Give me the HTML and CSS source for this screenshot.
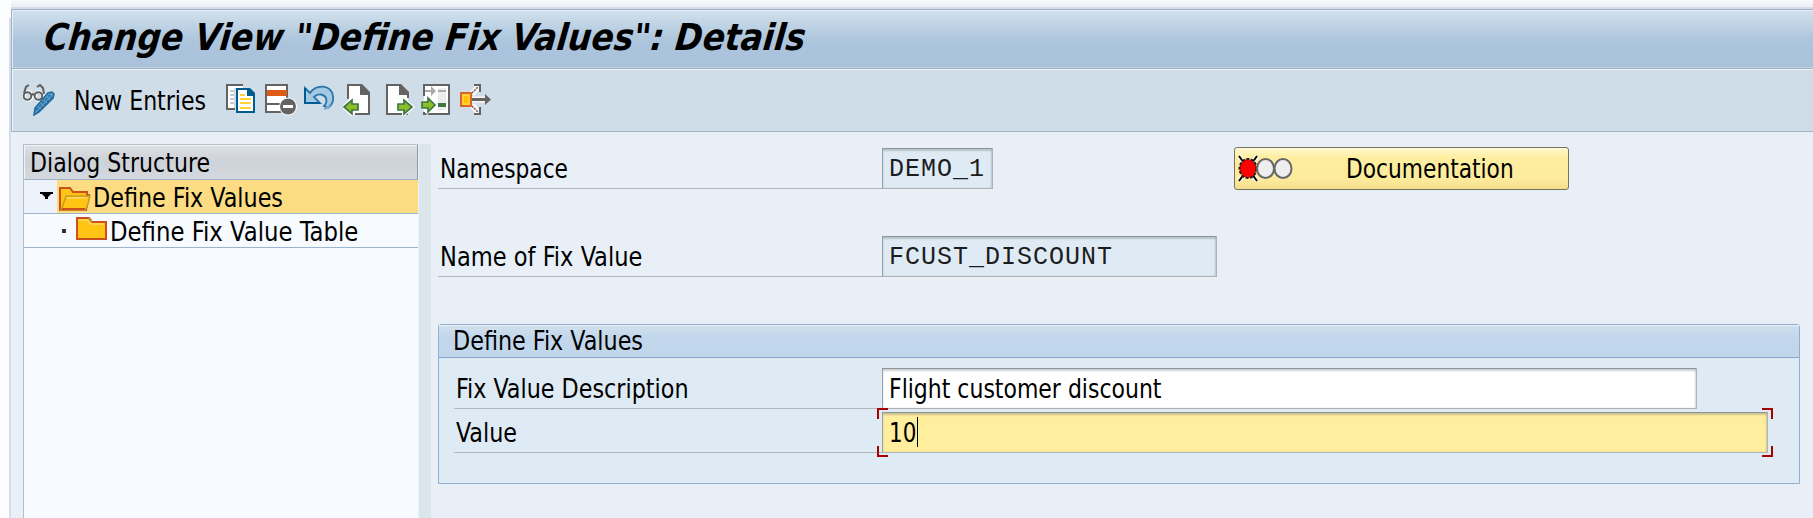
FILE: index.html
```
<!DOCTYPE html>
<html lang="en">
<head>
<meta charset="utf-8">
<title>Change View "Define Fix Values": Details</title>
<link rel="stylesheet" href="styles.css">
</head>
<body>
<div class="desktop">
  <main class="window">
    <header class="titlebar"><h1 class="title">Change View "Define Fix Values": Details</h1></header>
    <nav class="toolbar">
      <svg class="icon" viewBox="0 0 32 32">
        <g fill="none" stroke="#fff" stroke-width="3.5"><circle cx="5" cy="12" r="4"/><circle cx="16" cy="12" r="4"/></g>
        <g fill="none" stroke="#5f5f5f" stroke-width="2"><circle cx="4.5" cy="12" r="3.8"/><circle cx="15.5" cy="12" r="3.8"/><path d="M1 9 3 3 6 1M8 11l2-1 2 1M14 3l3-2 3 3 1 6"/></g>
        <path d="M11 31l1-7L25 9l4-1 2 2-1 4-14 14z" fill="#5b9bc8" stroke="#1c6898" stroke-width="1.5"/>
        <path d="M13 26 27 11M15 28 29 13" stroke="#246d9c" stroke-width="1.5" stroke-dasharray="3 1.5"/>
      </svg>
      <span class="entries"><span class="t t-entries">New Entries</span></span>
      <svg class="icon" viewBox="0 0 32 32">
        <path d="M0 0h17v4h-9v22H0z" fill="#fff"/><path d="M17 1H1v24h8" fill="none" stroke="#636363" stroke-width="2"/>
        <path d="M4 7h4M4 11h4M4 15h4M4 19h4" stroke="#c6c9cc" stroke-width="2"/>
        <path d="M11 5h12l5 5v18H11z" fill="#fff" stroke="#005b8e" stroke-width="2"/><path d="M21 4h3l5 5v3h-8z" fill="#005b8e"/>
        <path d="M14 11h5M14 15h11M14 19h11M14 24h11" stroke="#ffd23c" stroke-width="2"/>
      </svg>
      <svg class="icon" viewBox="0 0 32 32">
        <path d="M1 1h21v27H1z" fill="#fff"/><path d="M22 14V1H1v27h15M1 20h14" fill="none" stroke="#636363" stroke-width="2"/>
        <path d="M2 6h20v6H2z" fill="#dc5a14"/>
        <circle cx="23" cy="22.5" r="9" fill="#fff"/><circle cx="23" cy="22.5" r="8" fill="#636363"/><path d="M18 21h10v3H18z" fill="#fff"/>
      </svg>
      <svg class="icon" viewBox="0 0 32 32">
        <path d="M1 4v15h15l-6-6c4-4 10-3 12 1 1 3 0 6-2 8l4 2c4-3 6-7 5-12C27 0 12 0 6 9z" fill="#a5c8e4" stroke="#2875aa" stroke-width="1.8"/>
        <path d="M1 4v15h15" fill="none" stroke="#005b91" stroke-width="2"/>
        <path d="M20 25l4-1 2-4" fill="none" stroke="#80add0" stroke-width="2"/>
      </svg>
      <svg class="icon" viewBox="0 0 32 32">
        <path d="M5 1h13l8 8v21H5z" fill="#fff"/><path d="M5 15V1h13M26 9v21H12" fill="none" stroke="#636363" stroke-width="2"/><path d="M17 0h2l8 8v3H17z" fill="#636363"/>
        <path d="M1 23l8-7v4h6v6H9v4z" fill="#8cbe28" stroke="#fff" stroke-width="4"/><path d="M1 23l8-7v4h6v6H9v4z" fill="#8cbe28" stroke="#3c7841" stroke-width="1.7"/>
      </svg>
      <svg class="icon next" viewBox="0 0 32 32">
        <path d="M1 1h13l8 8v21H1z" fill="#fff"/><path d="M22 14V9M14 1H1v29h21" fill="none" stroke="#636363" stroke-width="2"/><path d="M13 0h2l8 8v3H13z" fill="#636363"/>
        <path d="M26 23l-8-7v4h-6v6h6v4z" fill="#8cbe28" stroke="#fff" stroke-width="4"/><path d="M26 23l-8-7v4h-6v6h6v4z" fill="#8cbe28" stroke="#3c7841" stroke-width="1.7"/>
      </svg>
      <svg class="icon position" viewBox="0 0 32 32">
        <path d="M3 1h25v29H3z" fill="#fff"/><path d="M3 12V1h25v29H3v-2" fill="none" stroke="#636363" stroke-width="2"/>
        <path d="M17 4h8v22h-8z" fill="#ececec"/><path d="M17 7h8" stroke="#aaa" stroke-width="2"/><path d="M4 6h6V2l5 5-5 5V8H4z" fill="#aaa"/><path d="M17 19h8v4h-8z" fill="#3c7846"/>
        <path d="M14 21l-7-7v4H1v6h6v4z" fill="#8cbe28" stroke="#fff" stroke-width="3"/><path d="M14 21l-7-7v4H1v6h6v4z" fill="#8cbe28" stroke="#3c7841" stroke-width="1.7"/>
      </svg>
      <svg class="icon" viewBox="0 0 32 32">
        <path d="M12 15.500h14M12 10l7-8M12 21l7 8" stroke="#fff4f4" stroke-width="6"/>
        <path d="M12 15.500h14" stroke="#636363" stroke-width="3"/><path d="M25 10l6 5.500-6 5.500z" fill="#636363"/>
        <path d="M12 9l6-6M12 22l6 6" stroke="#636363" stroke-width="1.500" stroke-dasharray="2 1"/><path d="M14 1h6v7M14 30h6v-7" fill="none" stroke="#636363" stroke-width="2"/>
        <path d="M1 9h10v13H1z" fill="#ffd23c" stroke="#dc6428" stroke-width="2"/><path d="M4 12h4v7H4z" fill="#ffbe00"/>
      </svg>
    </nav>
    <section class="work">
      <aside class="tree">
        <div class="tree-head"><span class="t t-dialog">Dialog Structure</span></div>
        <div class="tree-row selected">
          <span class="gutter"><svg class="arrow" viewBox="0 0 14 8"><path d="M0 0h13v2H11L8 5v2H5V5L2 2H0z" fill="#000"/></svg></span>
          <span class="node"><svg class="folder" viewBox="0 0 32 24">
            <path d="M1 1h10l3 4h14v3H30l-3 15H1z" fill="#ffc414" stroke="#cb501b" stroke-width="2"/>
            <path d="M3 21 7 9h24l-3 11-2 3H2z" fill="#ffc414" stroke="#c99b23" stroke-width="1.500"/><path d="M3 22h23" stroke="#cb501b" stroke-width="2"/><path d="M8 11h20" stroke="#ffd44c" stroke-width="2"/>
          </svg><span class="t t-dfv">Define Fix Values</span></span>
        </div>
        <div class="tree-row child">
          <span class="bullet"></span>
          <svg class="folder closed" viewBox="0 0 32 24"><path d="M1 1h12l3 4h14v17H1z" fill="#ffc414" stroke="#cb501b" stroke-width="2"/><path d="M13 1l3 4" stroke="#b99628" stroke-width="2"/><path d="M3 3h8l4 4h13" fill="none" stroke="#ffd44c" stroke-width="2"/></svg>
          <span class="t t-table">Define Fix Value Table</span>
        </div>
      </aside>
      <div class="splitter"></div>
      <section class="form">
        <div class="row">
          <label class="label"><span class="t t-ns">Namespace</span></label><div class="field mono ns">DEMO_1</div>
          <button class="doc"><svg class="lights" viewBox="0 0 56 28">
            <path d="M1 1l18 25M19 1 1 26" stroke="#fff" stroke-width="4"/><path d="M1 1l18 25M19 1 1 26" stroke="#000" stroke-width="2"/>
            <ellipse cx="10" cy="13.500" rx="8.500" ry="9.500" fill="red" stroke="#222" stroke-width="2" stroke-dasharray="3 1.500"/>
            <ellipse cx="27.500" cy="13.500" rx="8.500" ry="9.500" fill="#eee" stroke="#686868" stroke-width="2"/><ellipse cx="45" cy="13.500" rx="8.500" ry="9.500" fill="#eee" stroke="#686868" stroke-width="2"/>
          </svg><span class="t t-doc">Documentation</span></button>
        </div>
        <div class="row second"><label class="label"><span class="t t-name">Name of Fix Value</span></label><div class="field mono name">FCUST_DISCOUNT</div></div>
        <section class="group">
          <h2 class="group-head"><span class="t t-dfv">Define Fix Values</span></h2>
          <div class="row inner"><label class="label"><span class="t t-desc">Fix Value Description</span></label><div class="field white"><span class="t t-flight">Flight customer discount</span></div></div>
          <div class="row inner value"><label class="label"><span class="t t-value">Value</span></label><div class="field active"><span class="t t-ten">10</span><i class="caret"></i><i class="c tl"></i><i class="c tr"></i><i class="c bl"></i><i class="c br"></i></div></div>
        </section>
      </section>
    </section>
  </main>
</div>
</body>
</html>
```
FILE: styles.css
```
* { box-sizing: border-box; }
body { margin: 0; width: 1813px; height: 518px; overflow: hidden; background: #fbfcfe; color: #000; font: 26px/32px "DejaVu Sans Condensed", "DejaVu Sans", sans-serif; font-stretch: condensed; }
.desktop { height: 518px; padding: 9px 0 0 11px; background: linear-gradient(#d5dce6, #d5dce6) 11px 7px / 100% 2px no-repeat, linear-gradient(#f7f9fc, #eceff4) 11px 0 / 100% 7px no-repeat, linear-gradient(#d6ddea, #d6ddea) 9px 18px / 2px 100% no-repeat, #fcfdff; }
.window { height: 509px; background: #e8eff7; }
.titlebar { height: 60px; border: 1px solid #a0b0c4; border-right: 0; padding: 6px 0 0 31px; background: linear-gradient(#d2e1ed, #b1c9de 45%, #abc3dc 60%, #abc2db); box-shadow: inset 1px 1px #e4eef6, inset 0 -1px #c0d1e4; }
.title { margin: 0; font-size: 37px; line-height: 44px; font-weight: bold; font-style: oblique; white-space: nowrap; transform: skewX(-6deg) scaleX(.99); transform-origin: 0 80%; }
.toolbar { height: 63px; border: 1px solid #a0b3c6; border-width: 0 0 1px 1px; background: #cfdde8; box-shadow: inset 1px 1px #edf4fa; display: flex; align-items: flex-start; padding: 15px 0 0 11px; gap: 7px; }
.icon { flex: none; width: 32px; height: 32px; }
.entries { flex: none; width: 157px; padding-left: 12px; margin-top: 1px; }
.next { margin-left: 4px; }
.position { margin-left: -4px; }
.t { display: inline-block; white-space: nowrap; transform: scaleX(.92); transform-origin: 0 50%; }
.t-entries, .t-dialog { transform: scaleX(.944); }
.t-dfv, .t-desc, .t-value { transform: scaleX(.953); }
.t-table { transform: scaleX(.975); }
.t-ns, .t-doc { transform: scaleX(.93); }
.t-name { transform: scaleX(.965); }
.t-flight { transform: scaleX(.94); }
.work { display: flex; height: 386px; padding: 12px 0 0 12px; }
.tree { width: 395px; background: #f7faff; border: 1px solid #b3bfcc; border-width: 1px 0 0 1px; }
.tree-head { height: 35px; padding: 3px 0 0 6px; line-height: 30px; background: linear-gradient(#dde1e4, #cdd1d8 50%, #d4d9e0); border-bottom: 1px solid #9db0c7; border-right: 1px solid #929aa3; box-shadow: inset 1px 1px #f0f2f5; }
.tree-row { height: 34px; border-bottom: 1px solid #9db4cd; display: flex; }
.gutter { width: 33px; background: #eef3fb; padding: 0 0 0 16px; }
.arrow { display: block; width: 14px; height: 8px; margin-top: 12px; }
.node { flex: 1; background: #fcdc82; display: flex; padding-left: 2px; }
.folder { width: 32px; height: 24px; margin-top: 7px; flex: none; }
.node .t { margin-left: 2px; line-height: 36px; height: 33px; }
.bullet { width: 4px; height: 4px; background: #333; margin: 15px 10px 0 38px; }
.closed { margin-top: 3px; }
.child .t { line-height: 36px; height: 33px; margin-left: 2px; }
.splitter { width: 12px; margin-left: 1px; background: #dbe6eb; }
.form { width: 1362px; margin: 3px 0 0 7px; }
.row { height: 42px; display: flex; align-items: flex-start; }
.label { width: 444px; height: 42px; border-bottom: 1px solid #b2b8bb; padding: 6px 0 0 2px; }
.field { height: 41px; margin-top: 1px; padding-left: 6px; background: #deebf5; border: 1px solid #afb3b5; border-top-color: #8f9498; border-left-color: #9b9fa2; box-shadow: inset 0 2px 2px rgba(90,100,110,.28), inset -1px 0 2px rgba(90,100,110,.2); line-height: 40px; position: relative; }
.mono { font-family: "Liberation Mono", monospace; font-size: 25px; letter-spacing: 1px; line-height: 41px; color: #1c1c1c; }
.ns { width: 111px; }
.name { width: 335px; }
.second { margin-top: 46px; }
.doc { width: 335px; height: 43px; margin-left: 241px; padding: 0 0 0 3px; border: 1px solid #77725d; border-radius: 3px; background: linear-gradient(#fff8ce, #feee9f 24%, #feeb9c 75%, #f3de8e); display: flex; align-items: center; font: inherit; color: #000; box-shadow: inset 0 1px #fffbe2; }
.lights { width: 56px; height: 28px; }
.doc .t { margin: 1px 0 0 52px; }
.group { height: 160px; margin-top: 47px; border: 1px solid #91aed0; background: #deeaf4; border-radius: 3px 3px 0 0; }
.group-head { margin: 0 0 9px; height: 33px; font-size: 26px; font-weight: normal; line-height: 32px; padding-left: 14px; background: linear-gradient(#d1e0ed, #c2d7ec 40%, #c0d6e9); border-bottom: 1px solid #87a4cb; box-shadow: inset 0 1px #e5f0f8; }
.inner { padding-left: 15px; }
.inner .label { width: 428px; }
.value { margin-top: 2px; }
.white { width: 815px; background: #fff; }
.active { width: 886px; background: #ffee9e; }
.caret { position: absolute; left: 34px; top: 4px; width: 1px; height: 30px; background: #000; }
.c { position: absolute; width: 11px; height: 11px; border: 0 solid #a80000; }
.tl { left: -6px; top: -5px; border-width: 2px 0 0 2px; }
.tr { right: -6px; top: -5px; border-width: 2px 2px 0 0; }
.bl { left: -6px; bottom: -5px; border-width: 0 0 2px 2px; }
.br { right: -6px; bottom: -5px; border-width: 0 2px 2px 0; }
```
